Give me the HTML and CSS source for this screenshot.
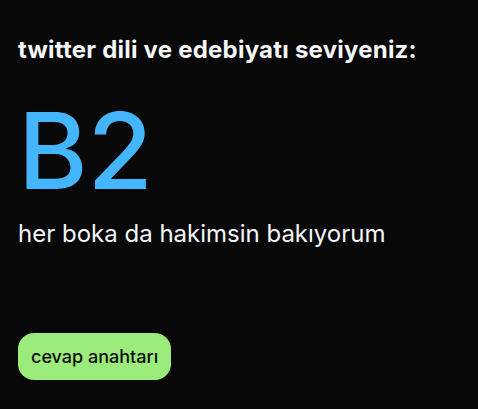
FILE: index.html
```html
<!DOCTYPE html>
<html lang="tr">
<head>
<meta charset="utf-8">
<link rel="stylesheet" href="styles.css">
</head>
<body>
<main class="result">
  <h1 class="result-title">twitter dili ve edebiyatı seviyeniz:</h1>
  <div class="result-level">B2</div>
  <p class="result-note">her boka da hakimsin bakıyorum</p>
  <button class="answer-btn">cevap anahtarı</button>
</main>
</body>
</html>
```
FILE: styles.css
```css
html, body {
  margin: 0;
  background: #080808;
}
body {
  font-family: Inter, "Noto Sans", sans-serif;
  color: #f5f7fa;
}
.result {
  display: flex;
  flex-direction: column;
  align-items: flex-start;
  padding: 34px 18px 0;
}
.result-title {
  margin: 0;
  font-size: 24px;
  font-weight: 700;
  line-height: 32px;
  letter-spacing: 0.22px;
}
.result-level {
  margin-top: 30px;
  font-size: 106px;
  line-height: 110px;
  color: #44b6ff;
  font-weight: 500;
}
.result-note {
  margin: 12px 0 0;
  font-size: 24px;
  line-height: 32px;
}
.answer-btn {
  margin-top: 83px;
  font-family: inherit;
  font-size: 18px;
  font-weight: 500;
  color: #0a0a0a;
  background: #9bec7a;
  border: none;
  border-radius: 16px;
  padding: 0 13px;
  height: 47px;
}
```
